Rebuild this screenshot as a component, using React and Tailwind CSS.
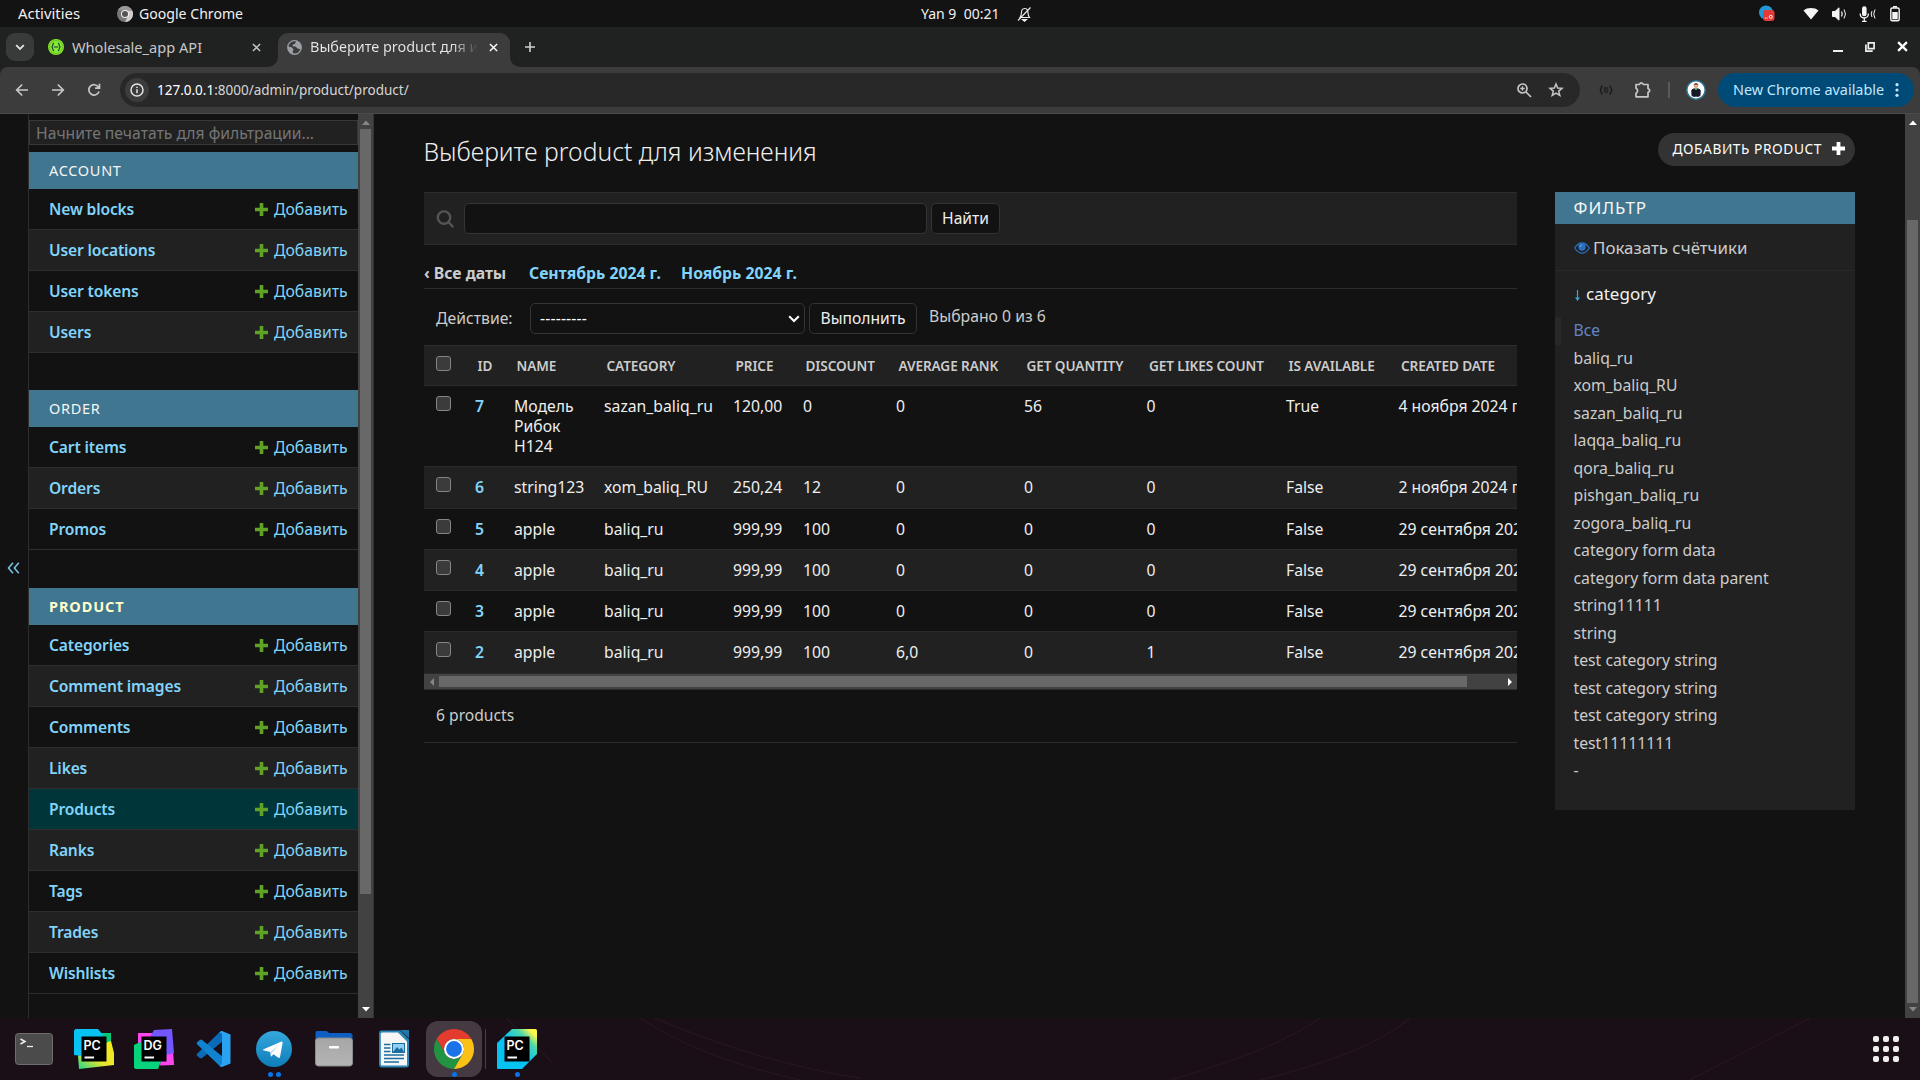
import React from 'react';

const accountModels = ['New blocks', 'User locations', 'User tokens', 'Users'];
const orderModels = ['Cart items', 'Orders', 'Promos'];
const productModels = ['Categories', 'Comment images', 'Comments', 'Likes', 'Products', 'Ranks', 'Tags', 'Trades', 'Wishlists'];

const headers = ['ID', 'NAME', 'CATEGORY', 'PRICE', 'DISCOUNT', 'AVERAGE RANK', 'GET QUANTITY', 'GET LIKES COUNT', 'IS AVAILABLE', 'CREATED DATE'];
const rows = [
  { h: 'h-[81px]', cells: ['7', 'Модель Рибок Н124', 'sazan_baliq_ru', '120,00', '0', '0', '56', '0', 'True', '4 ноября 2024 г.'] },
  { h: 'h-[42px]', cells: ['6', 'string123', 'xom_baliq_RU', '250,24', '12', '0', '0', '0', 'False', '2 ноября 2024 г.'] },
  { h: 'h-[41px]', cells: ['5', 'apple', 'baliq_ru', '999,99', '100', '0', '0', '0', 'False', '29 сентября 2024 г.'] },
  { h: 'h-[41px]', cells: ['4', 'apple', 'baliq_ru', '999,99', '100', '0', '0', '0', 'False', '29 сентября 2024 г.'] },
  { h: 'h-[41px]', cells: ['3', 'apple', 'baliq_ru', '999,99', '100', '0', '0', '0', 'False', '29 сентября 2024 г.'] },
  { h: 'h-[42px]', cells: ['2', 'apple', 'baliq_ru', '999,99', '100', '6,0', '0', '1', 'False', '29 сентября 2024 г.'] },
];
const categories = ['Все', 'baliq_ru', 'xom_baliq_RU', 'sazan_baliq_ru', 'laqqa_baliq_ru', 'qora_baliq_ru', 'pishgan_baliq_ru', 'zogora_baliq_ru', 'category form data', 'category form data parent', 'string11111', 'string', 'test category string', 'test category string', 'test category string', 'test11111111', '-'];

const tableGrid = 'grid grid-cols-[41px_39px_90px_129px_70px_93px_128px_122.5px_139.5px_112.5px_240px]';

function TopBar() {
  return (
    <div className="grid h-[27px] shrink-0 grid-cols-[900px_160px_1fr] items-center bg-[#131313] text-[#f0f0f0]">
      <div className="flex items-center pl-[18px]">
        <span className="w-[99px] text-[14.9px] leading-none">Activities</span>
        <svg width="16" height="16" viewBox="0 0 16 16">
          <circle cx="8" cy="8" r="8" fill="#777" />
          <path d="M8 4.5H15.2A8 8 0 0 1 8 16L11 10Z" fill="#cfcfcf" />
          <path d="M1 4A8 8 0 0 1 15 4.5H8Z" fill="#999" />
          <circle cx="8" cy="8" r="4" fill="#eee" />
          <circle cx="8" cy="8" r="3" fill="#555" />
        </svg>
        <span className="ml-[6px] pt-[1px] text-[14.1px] leading-none">Google Chrome</span>
      </div>
      <div className="flex items-center pl-[21px]">
        <span className="w-[96px] text-[14px] leading-none whitespace-pre">Yan 9  00:21</span>
        <svg width="15" height="16" viewBox="0 0 15 16" fill="none" stroke="#eee" strokeWidth="1.1">
          <path d="M3 11.5C5 9 4 6 5 4C6 2 9.500 2 10.500 4C11.200 6 10.500 9 12.500 11.500Z" />
          <path d="M5.500 13.500H9.500L7.500 15.200Z" fill="#eee" />
          <path d="M1 14.500L13.500 1.500" />
        </svg>
      </div>
      <div className="flex items-center justify-end pr-[19px]">
        <svg width="16" height="17" viewBox="0 0 16 17" className="mr-[28px]">
          <circle cx="7" cy="7.500" r="7" fill="#2497d8" />
          <rect x="4" y="5" width="11.500" height="11" rx="3" fill="#e53a35" />
          <path d="M6 13H9" stroke="#fff" strokeDasharray="1 .6" />
          <circle cx="11.800" cy="11.800" r="1.500" fill="none" stroke="#fff" strokeWidth=".9" />
        </svg>
        <svg width="16" height="13" viewBox="0 0 16 13" className="mr-[13px]"><path d="M8 12.500L.5 3.500C4 .2 12 .2 15.500 3.500Z" fill="#f5f5f5" /></svg>
        <svg width="16" height="14" viewBox="0 0 16 14" className="mr-[11px]" fill="none" stroke="#f5f5f5">
          <path d="M.5 4.500H3L7 .8V13.200L3 9.500H.5Z" fill="#f5f5f5" />
          <path d="M9.500 4.500Q11 7 9.500 9.500" strokeWidth="1.300" />
          <path d="M12 2.500Q15 7 12 11.500" strokeWidth="1" />
        </svg>
        <svg width="18" height="16" viewBox="0 0 18 16" className="mr-[12px]" fill="none" stroke="#f5f5f5">
          <rect x="3" y=".3" width="4.600" height="10" rx="2.300" fill="#f5f5f5" stroke="none" />
          <path d="M1.200 7.500C1.200 13.500 9.400 13.500 9.400 7.500M5.300 12V15.400M3 15.400H7.600" strokeWidth="1.300" />
          <path d="M13 5Q11.400 8 13 11M16 3.500Q13.400 8 16 12.500" />
        </svg>
        <svg width="12" height="16" viewBox="0 0 12 16">
          <path d="M4 0H8V1.500H4Z" fill="#f5f5f5" />
          <rect x="1.800" y="2" width="8.400" height="12.800" rx="1.500" fill="none" stroke="#f5f5f5" strokeWidth="1.400" />
          <rect x="3.300" y="6" width="5.400" height="7.300" fill="#f5f5f5" />
        </svg>
      </div>
    </div>
  );
}

function Cross({ size = 9, color = '#e3e3e3', w = 1.6 }) {
  return (
    <svg width={size} height={size} viewBox="0 0 10 10" fill="none" stroke={color} strokeWidth={w}>
      <path d="M1 1L9 9M9 1L1 9" />
    </svg>
  );
}

function TabStrip() {
  return (
    <div className="flex h-[40px] shrink-0 items-end bg-[#202222]">
      <div className="mb-[6px] ml-[6px] flex h-[28px] w-[28px] items-center justify-center rounded-[9px] bg-[#393a3a]">
        <svg width="10" height="7" viewBox="0 0 10 7" fill="none" stroke="#e3e3e3" strokeWidth="1.800"><path d="M1.200 1.200L5 5L8.800 1.200" /></svg>
      </div>
      <div className="flex h-[34px] w-[234px] items-center pb-[6px] pl-[14px]">
        <svg width="16" height="16" viewBox="0 0 16 16" className="shrink-0">
          <circle cx="8" cy="8" r="8" fill="#85ea2d" />
          <circle cx="8" cy="8" r="6.600" fill="none" stroke="#5aa81c" strokeWidth=".6" />
          <path d="M6 4.200C4.300 4.200 5.300 7.800 3.500 8C5.300 8.200 4.300 11.800 6 11.800M10 4.200C11.700 4.200 10.700 7.800 12.500 8C10.700 8.200 11.700 11.800 10 11.800M5.800 8H10.200" fill="none" stroke="#173647" strokeWidth="1.200" />
        </svg>
        <span className="ml-[8px] w-[180px] text-[14.600px] leading-none text-[#c7c7c7]">Wholesale_app API</span>
        <Cross color="#c7c7c7" />
      </div>
      <div className="relative ml-[10px] flex h-[34px] w-[232px] items-center rounded-t-[10px] bg-[#3c3c3c] pb-[6px] pl-[9px]">
        <svg className="absolute bottom-0 -left-[10px]" width="10" height="10" viewBox="0 0 10 10"><path d="M10 0V10H0A10 10 0 0 0 10 0Z" fill="#3c3c3c" /></svg>
        <svg className="absolute -right-[10px] bottom-0" width="10" height="10" viewBox="0 0 10 10"><path d="M0 0V10H10A10 10 0 0 1 0 0Z" fill="#3c3c3c" /></svg>
        <svg width="15" height="15" viewBox="0 0 15 15" className="shrink-0">
          <circle cx="7.500" cy="7.500" r="7.400" fill="#9aa0a6" />
          <path d="M1.500 6.500L5 7.500L6.500 9.500L5.500 12.500L7 13.600C10 13.800 12.500 12 13.300 9.200L10.500 8.500L8.500 6.500H6L5.500 4.800L8 3.800L9 1.400C5 .6 1.800 3.200 1.500 6.500Z" fill="#3c3c3c" />
        </svg>
        <span className="ml-[8px] w-[168px] overflow-hidden bg-gradient-to-r from-[#e8e8e8] from-84% to-transparent bg-clip-text py-1 text-[14.450px] leading-none whitespace-nowrap text-transparent">Выберите product для изменения</span>
        <span className="ml-[11px] flex"><Cross color="#fff" /></span>
      </div>
      <svg className="mb-[15px] ml-[15px]" width="10" height="10" viewBox="0 0 10 10" stroke="#d0d0d0" strokeWidth="1.600"><path d="M5 0V10M0 5H10" /></svg>
      <div className="mb-[15px] ml-auto flex items-center gap-[22px] pr-[12px]">
        <svg width="10" height="10" viewBox="0 0 10 10"><path d="M0 8H10V10H0Z" fill="#eee" /></svg>
        <svg width="10" height="10" viewBox="0 0 10 10" fill="none" stroke="#eee" strokeWidth="1.700"><path d="M3.300 .9H9.100V6.700H3.300ZM.9 2.500V9.100H7.700" /></svg>
        <Cross size={11} color="#fff" w={2} />
      </div>
    </div>
  );
}

function Toolbar() {
  return (
    <div className="h-[47px] shrink-0 bg-[#202222]">
      <div className="flex h-full items-center rounded-t-[8px] border-b border-[#4a4a4a] bg-[#3c3c3c] pl-[15px]">
        <svg width="14" height="14" viewBox="0 0 14 14" fill="none" stroke="#c7c7c7" strokeWidth="1.700"><path d="M13 7H2M7.200 1.500L1.700 7L7.200 12.500" /></svg>
        <svg className="ml-[22px]" width="14" height="14" viewBox="0 0 14 14" fill="none" stroke="#c7c7c7" strokeWidth="1.700"><path d="M1 7H12M6.800 1.500L12.300 7L6.800 12.500" /></svg>
        <svg className="ml-[22px]" width="14" height="14" viewBox="0 0 14 14" fill="none" stroke="#c7c7c7" strokeWidth="1.700"><path d="M12 8.500A5.200 5.200 0 1 1 11.500 4.200M12.500 .8V5.200H8.100" /></svg>
        <div className="ml-[19px] flex h-[34px] w-[1460px] items-center rounded-full bg-[#282828] pl-[5px]">
          <div className="flex h-[24px] w-[24px] items-center justify-center rounded-full bg-[#3c3c3c]">
            <svg width="14" height="14" viewBox="0 0 14 14" fill="none" stroke="#e3e3e3" strokeWidth="1.500"><circle cx="7" cy="7" r="6" /><path d="M7 6.200V10.200M7 3.700V5.100" /></svg>
          </div>
          <span className="ml-[8px] pt-[1px] text-[13.500px] leading-none text-[#d6d6d6]"><span className="text-white">127.0.0.1</span>:8000/admin/product/product/</span>
          <svg className="ml-auto" width="15" height="15" viewBox="0 0 15 15" fill="none" stroke="#c7c7c7" strokeWidth="1.700"><circle cx="5.500" cy="5.500" r="4.500" /><path d="M9 9L14 14" /><path d="M3.300 5.500H7.700M5.500 3.300V7.700" strokeWidth="1.300" /></svg>
          <svg className="mr-[16px] ml-[16px]" width="16" height="16" viewBox="0 0 16 16" fill="none" stroke="#c7c7c7" strokeWidth="1.500"><path d="M8 2L9.700 6L14 6.300L10.700 9.100L11.800 13.400L8 11.100L4.200 13.400L5.300 9.100L2 6.300L6.300 6Z" /></svg>
        </div>
        <svg className="ml-[19px]" width="14" height="10" viewBox="0 0 14 10" fill="none" stroke="#151515" strokeWidth="1.200"><path d="M3.500 .8C1.300 .8 2.800 4.600 .8 5C2.800 5.400 1.300 9.200 3.500 9.200M10.500 .8C12.700 .8 11.200 4.600 13.200 5C11.200 5.400 12.700 9.200 10.500 9.200M4.800 3H9.200M4.800 5H9.200M4.800 7H9.200" /></svg>
        <svg className="ml-[20px]" width="19" height="18" viewBox="0 0 19 18" fill="none" stroke="#c7c7c7" strokeWidth="1.700"><path d="M3 3.500H6.500Q8 .2 10.500 3.500H15V7.500Q18.500 9.500 15 11.500V15.800H3V12.500Q6.200 9.700 3 7Z" strokeLinejoin="round" /></svg>
        <div className="ml-[16px] h-[16px] w-[2px] bg-[#5a5a5a]" />
        <svg className="ml-[16px]" width="20" height="20" viewBox="0 0 20 20">
          <circle cx="10" cy="10" r="9.200" fill="#fff" stroke="#2b7696" strokeWidth="1.500" />
          <circle cx="10" cy="5.800" r="2.200" fill="#e2a884" />
          <path d="M7.600 5C7.600 2.800 12.400 2.800 12.400 5L11.500 4.600H8.500Z" fill="#45241c" />
          <path d="M5.500 15.500L5.200 10.500Q6 8.500 8.500 8.300L10 10L11.500 8.300Q14 8.500 14.800 10.500L14.500 15.500L13 16.800H7Z" fill="#15192a" />
          <path d="M8.700 8.200H11.300L10 10.500Z" fill="#3fa35a" />
        </svg>
        <div className="ml-[12px] flex h-[34px] w-[196px] items-center rounded-full bg-[#004a77] pl-[15px]">
          <span className="w-[162px] text-[14.400px] leading-none whitespace-nowrap text-[#c2e7ff]">New Chrome available</span>
          <svg width="4" height="14" viewBox="0 0 4 14" fill="#c2e7ff"><circle cx="2" cy="1.700" r="1.600" /><circle cx="2" cy="7" r="1.600" /><circle cx="2" cy="12.300" r="1.600" /></svg>
        </div>
      </div>
    </div>
  );
}

function ModelGroup({ title, models, current, selected }) {
  return (
    <div>
      <div className={`flex h-[37px] items-center bg-[#417690] pl-[20px] text-[14.500px] leading-none ${current ? 'font-bold tracking-[0.9px] text-[#ffffcc]' : 'tracking-[0.7px] text-[#f5f5f5]'}`}>{title}</div>
      {models.map((m, i) => (
        <div key={m} className={`flex h-[41px] items-center border-b border-[#2e2e2e] pr-[11px] pl-[20px] text-[15.750px] leading-none text-[#81d4fa] ${m === selected ? 'bg-[#00363a]' : i % 2 ? 'bg-[#212121]' : 'bg-[#121212]'}`}>
          <span className="pt-[2px] text-[15.600px] font-semibold tracking-[-0.150px]">{m}</span>
          <svg className="ml-auto" width="13" height="13" viewBox="0 0 13 13"><path d="M4.700 0H8.300V4.700H13V8.300H8.300V13H4.700V8.300H0V4.700H4.700Z" fill="#5fa225" /></svg>
          <span className="ml-[6px] w-[73px] pt-[2px] whitespace-nowrap">Добавить</span>
        </div>
      ))}
    </div>
  );
}

function Sidebar() {
  return (
    <div className="flex w-[374px] shrink-0">
      <div className="flex w-[29px] justify-center border-r border-[#2e2e2e]">
        <svg className="mt-[448px] mr-[1px]" width="13" height="12" viewBox="0 0 13 12" fill="none" stroke="#79c8ec" strokeWidth="1.500"><path d="M6 .8L1.500 6L6 11.200M11.800 .8L7.300 6L11.800 11.200" /></svg>
      </div>
      <div className="w-[329px] overflow-hidden pt-[6px]">
        <div className="mb-[7px] flex h-[25px] items-center border border-[#383838] bg-[#212121] pt-[2px] pl-[6px] text-[15.700px] leading-none whitespace-nowrap text-[#757575]">Начните печатать для фильтрации...</div>
        <ModelGroup title="ACCOUNT" models={accountModels} />
        <div className="h-[37px]" />
        <ModelGroup title="ORDER" models={orderModels} />
        <div className="h-[38px]" />
        <ModelGroup title="PRODUCT" models={productModels} current selected="Products" />
      </div>
      <div className="flex w-[16px] flex-col items-center border-r border-[#333333] bg-[#424242]">
        <svg className="mt-[6px]" width="8" height="5" viewBox="0 0 8 5"><path d="M0 5L4 .5L8 5Z" fill="#868686" /></svg>
        <div className="mt-[4px] h-[765px] w-[11px] bg-[#686868]" />
        <svg className="mt-auto mb-[6px]" width="8" height="5" viewBox="0 0 8 5"><path d="M0 0L4 4.500L8 0Z" fill="#fff" /></svg>
      </div>
    </div>
  );
}

function Checkbox({ className = '' }) {
  return <div className={`ml-[12px] h-[15px] w-[15px] rounded-[3px] border border-[#858585] bg-[#3b3b3b] ${className}`} />;
}

const button = 'flex h-[31px] items-center justify-center rounded-[5px] border border-[#333333] bg-[#121212] text-[15.600px] leading-none text-[#eeeeee]';

function ChangeList() {
  return (
    <div className="w-[1093px] shrink-0">
      <div className="flex h-[53px] items-center border-y border-[#2c2c2c] bg-[#212121] pl-[12px]">
        <svg width="18" height="18" viewBox="0 0 18 18" fill="none" stroke="#555" strokeWidth="2.400"><circle cx="8" cy="7.600" r="6.200" /><path d="M12.400 12L16.600 16.500" strokeLinecap="round" /></svg>
        <div className="ml-[10px] h-[31px] w-[463px] rounded-[5px] border border-[#353535] bg-[#121212]" />
        <div className={`${button} ml-[4px] w-[69px]`}>Найти</div>
      </div>
      <div className="flex h-[44px] items-center border-b border-[#2c2c2c] pt-[15px] text-[15.750px] leading-none font-bold whitespace-nowrap">
        <span className="w-[105px] text-[#cccccc]">‹ Все даты</span>
        <span className="w-[152px] text-[#81d4fa]">Сентябрь 2024 г.</span>
        <span className="text-[#81d4fa]">Ноябрь 2024 г.</span>
      </div>
      <div className="flex h-[56px] items-center pt-[3px] pl-[12px] text-[15.750px] leading-none text-[#cccccc]">
        <span className="w-[94px]">Действие:</span>
        <div className="flex h-[31px] w-[275px] items-center rounded-[5px] border border-[#353535] bg-[#121212] pl-[9px] text-white">
          <span className="tracking-[0.150px]">---------</span>
          <svg className="mr-[4px] ml-auto" width="12" height="8" viewBox="0 0 12 8" fill="none" stroke="#fff" strokeWidth="2"><path d="M1.200 1.200L6 6L10.800 1.200" /></svg>
        </div>
        <div className={`${button} ml-[4px] w-[108px]`}>Выполнить</div>
        <span className="ml-[12px] pb-[3px]">Выбрано 0 из 6</span>
      </div>
      <div className="overflow-hidden">
        <div className={`${tableGrid} h-[41px] items-center border-y border-[#2e2e2e] bg-[#212121] text-[13.600px] leading-none font-semibold tracking-[-0.100px] text-[#cccccc]`}>
          <Checkbox className="mb-[4px]" />
          {headers.map((h) => <span key={h} className="pl-[12.500px] whitespace-nowrap">{h}</span>)}
        </div>
        {rows.map((r, i) => (
          <div key={i} className={`${tableGrid} ${r.h} border-b border-[#2a2a2a] pt-[10px] text-[15.750px] leading-[20px] text-[#eeeeee] ${i % 2 ? 'bg-[#212121]' : 'bg-[#121212]'}`}>
            <Checkbox />
            {r.cells.map((c, j) => (
              <span key={j} className={`pl-[10px] ${j === 0 ? 'font-semibold text-[#81d4fa]' : ''} ${j === 1 ? 'w-[84px]' : 'whitespace-nowrap'}`}>{c}</span>
            ))}
          </div>
        ))}
        <div className="flex h-[15px] items-center bg-[#424242]">
          <svg className="ml-[6px]" width="4" height="8" viewBox="0 0 4 8"><path d="M4 0L0 4L4 8Z" fill="#868686" /></svg>
          <div className="ml-[5px] h-[11px] w-[1028px] bg-[#686868]" />
          <svg className="mr-[5px] ml-auto" width="4" height="8" viewBox="0 0 4 8"><path d="M0 0L4 4L0 8Z" fill="#fff" /></svg>
        </div>
      </div>
      <div className="flex h-[54px] items-center border-y border-[#2c2c2c] pl-[12px] text-[15.650px] leading-none text-[#cccccc]">6 products</div>
    </div>
  );
}

function FilterPanel() {
  return (
    <div className="h-[618px] w-[300px] shrink-0 bg-[#212121] leading-none text-[#cccccc]">
      <div className="flex h-[32px] items-center bg-[#417690] pb-[2px] pl-[18.500px] text-[17px] tracking-[1px] text-[#f5f5f5]">ФИЛЬТР</div>
      <div className="flex h-[47px] items-center border-b border-[#282828] pt-[2px] pl-[19px] text-[16.900px] whitespace-nowrap">
        <svg className="mr-[3px]" width="16" height="12" viewBox="0 0 16 12" fill="none" stroke="#2b70c0" strokeWidth="1.300">
          <path d="M.7 6C3.500 1.800 5.800 .8 8 .8C10.200 .8 12.500 1.800 15.300 6C12.500 10.200 10.200 11.200 8 11.200C5.800 11.200 3.500 10.200 .7 6Z" />
          <circle cx="8" cy="5" r="3.700" fill="#2b70c0" stroke="none" />
          <path d="M6 5Q6 3 8 2.700" stroke="#7fb2e8" strokeWidth=".8" />
        </svg>
        <span className="pt-[1px]">Показать счётчики</span>
      </div>
      <div className="flex h-[46px] items-center pb-[1px] pl-[20px] text-[#f2f2f2]">
        <svg className="mt-[3px] mr-[6px]" width="5" height="11" viewBox="0 0 5 11" fill="#3aa4dc"><path d="M1.900 0H3.100V7.500H5L2.500 11L0 7.500H1.900Z" /></svg>
        <span className="text-[17px]">category</span>
      </div>
      <ul className="text-[15.750px]">
        {categories.map((c, i) => (
          <li key={i} className={`flex h-[27.500px] items-center pt-[1px] ${i === 0 ? 'border-l-[6px] border-[#282828] pl-[12.500px] text-[#6284c6]' : 'pl-[18.500px]'}`}>{c}</li>
        ))}
      </ul>
    </div>
  );
}

function Page() {
  return (
    <div className="flex h-[904px] shrink-0 overflow-hidden bg-[#121212]">
      <Sidebar />
      <div className="flex-1 pl-[50px]">
        <div className="flex h-[78px] items-start justify-between pr-[50px]">
          <h1 className="-ml-[0.500px] pt-[21px] text-[24.700px] leading-[34px] font-light text-[#eeeeee]">Выберите product для изменения</h1>
          <div className="mt-[19px] flex h-[33px] w-[197px] items-center rounded-full bg-[#333333] pl-[14.500px] text-[13.750px] leading-none tracking-[0.550px] text-white">
            <span className="w-[159px] pb-[1px] whitespace-nowrap">ДОБАВИТЬ PRODUCT</span>
            <svg className="mb-[2px]" width="13" height="13" viewBox="0 0 13 13"><path d="M4.600 0H8.400V4.600H13V8.400H8.400V13H4.600V8.400H0V4.600H4.600Z" fill="#fff" /></svg>
          </div>
        </div>
        <div className="flex gap-[38px]">
          <ChangeList />
          <FilterPanel />
        </div>
      </div>
      <div className="flex w-[15px] flex-col items-center bg-[#424242]">
        <svg className="mt-[6px]" width="8" height="5" viewBox="0 0 8 5"><path d="M0 5L4 .5L8 5Z" fill="#fff" /></svg>
        <div className="mt-[95px] h-[783px] w-[11px] bg-[#686868]" />
        <svg className="mt-auto mb-[6px]" width="8" height="5" viewBox="0 0 8 5"><path d="M0 0L4 4.500L8 0Z" fill="#868686" /></svg>
      </div>
    </div>
  );
}

function IdeLabel({ label }) {
  return (
    <>
      <rect x="7.500" y="7.500" width="25" height="25" fill="#000" />
      <text x="9.500" y="20.500" fill="#fff" fontSize="12.500" fontWeight="600" fontFamily="Inter, sans-serif">{label}</text>
      <path d="M10.500 27.500H20V29.500H10.500Z" fill="#fff" />
    </>
  );
}

function DockItem({ dots = 0, active, children }) {
  return (
    <div className={`relative flex h-[56px] w-[56px] items-center justify-center rounded-[12px] ${active ? 'bg-[#453a41]' : ''}`}>
      {children}
      <div className="absolute bottom-0 flex gap-[3px]">
        {dots > 0 && <i className="h-[5px] w-[5px] rounded-full bg-[#0a73ea]" />}
        {dots > 1 && <i className="h-[5px] w-[5px] rounded-full bg-[#0a73ea]" />}
      </div>
    </div>
  );
}

function Dock() {
  return (
    <div className="relative flex h-[62px] shrink-0 items-center bg-[#1a0f17] pl-[6px]">
      <svg className="absolute inset-0" width="1920" height="62" fill="none" stroke="#24151f" strokeWidth="1.500">
        <path d="M506 0L552 44M640 0Q700 40 800 62M655 0Q760 45 860 60M1170 62Q1280 30 1320 0M1260 62Q1370 35 1410 0M1690 62L1810 0" />
      </svg>
      <div className="relative flex gap-[4px]">
        <DockItem>
          <svg width="38" height="32" viewBox="0 0 38 32"><rect x=".5" y=".5" width="37" height="31" rx="3" fill="#4b4b4b" stroke="#6e6e6e" /><path d="M5.500 6L10 8.500L5.500 11" fill="none" stroke="#eee" strokeWidth="1.500" /><path d="M12 13.500H18" stroke="#eee" strokeWidth="1.300" /></svg>
        </DockItem>
        <DockItem>
          <svg width="40" height="40" viewBox="0 0 40 40">
            <defs><linearGradient id="pa" x1="0" y1="1" x2="1" y2="0"><stop offset="0" stopColor="#21d789" /><stop offset=".45" stopColor="#e9e52f" /><stop offset="1" stopColor="#f3ea1c" /></linearGradient></defs>
            <path d="M23 4H37V20H23Z" fill="#07c878" />
            <path d="M4 27L10 22L37 12L40 24V36L5 40Z" fill="url(#pa)" />
            <path d="M1.500 0H24L29 6L8 27L0 26V1.500Z" fill="#07c3f2" />
            <IdeLabel label="PC" />
          </svg>
        </DockItem>
        <DockItem>
          <svg width="40" height="40" viewBox="0 0 40 40">
            <path d="M4 4H20V18H4Z" fill="#ff45ed" />
            <path d="M28 20L39 21L40 36L26 36.500Z" fill="#ff45ed" />
            <path d="M20 1L38 0L40 24L28 27L16 8Z" fill="#7256ff" />
            <path d="M0 16L6 13L28 30L24 40H1.500L0 38.500Z" fill="#07d37d" />
            <IdeLabel label="DG" />
          </svg>
        </DockItem>
        <DockItem>
          <svg width="36" height="36" viewBox="0 0 36 36">
            <path d="M26 0L27 10L5.500 27.500L3.800 27L.8 24.500V23L23.500 1.200Z" fill="#0a6ab6" />
            <path d="M26 36L27 26L5.500 8.500L3.800 9L.8 11.500V13L23.500 34.800Z" fill="#0f83cf" />
            <path d="M26 0L34.500 3.500V32.500L26 36C25 36 23.500 35 23.500 34.800L26 33V3L23.500 1.200C24.500 .3 25 0 26 0Z" fill="#2ba2f0" />
          </svg>
        </DockItem>
        <DockItem dots={2}>
          <svg width="36" height="38" viewBox="0 0 36 38">
            <defs><linearGradient id="tg" x1="0" y1="0" x2="0" y2="1"><stop offset="0" stopColor="#35a8dd" /><stop offset="1" stopColor="#0d7db9" /></linearGradient></defs>
            <circle cx="18" cy="19" r="18" fill="url(#tg)" />
            <path d="M7 19.500L25.500 11.500Q27 11 26.600 13L24 27Q23.500 28.600 22 27.600L17.500 24.200L15 26.700L14.300 22L8 20.500Q6.500 20 7 19.500Z" fill="#fff" />
            <path d="M14.300 22L23 14.500L15.600 23L15 26.700Z" fill="#b9d9ea" />
          </svg>
        </DockItem>
        <DockItem>
          <svg width="38" height="36" viewBox="0 0 38 36">
            <defs><linearGradient id="fm" x1="0" y1="0" x2="0" y2="1"><stop offset="0" stopColor="#a6a6a6" /><stop offset="1" stopColor="#b4b4b4" /></linearGradient></defs>
            <path d="M2 0H11Q12.500 0 14 2H35Q37.500 2 37.500 4.500V14H.5V2Q.5 0 2 0Z" fill="#0f5fc2" />
            <rect x=".5" y="7" width="37" height="28" rx="3" fill="url(#fm)" stroke="#8a8a8a" />
            <rect x="14" y="15" width="10" height="2.500" rx="1" fill="#fff" />
          </svg>
        </DockItem>
        <DockItem>
          <svg width="32" height="38" viewBox="0 0 32 38">
            <path d="M3.500 .5H22L31 9.500V34.500Q31 37.500 28 37.500H4Q1 37.500 1 34.500V3Q1 .5 3.500 .5Z" fill="#2a85b8" />
            <path d="M4 2.500H20L29 11.500V35.500H4Q2.800 35.500 2.800 34V4Q2.800 2.500 4 2.500Z" fill="#f6f6f6" />
            <path d="M22 0H31V8.500Z" fill="#1f76a8" />
            <path d="M6 14.500H12.500M6 18H12.500M6 21.500H12.500M6 25H26M6 28.500H26M6 32H21" stroke="#1a6d9e" strokeWidth="1.500" />
            <rect x="14.500" y="13.500" width="12" height="9" fill="#8fd1f4" stroke="#1a6d9e" />
            <path d="M15 22L19 17L21.500 19.500L23.500 17.500L26 22Z" fill="#1a6d9e" />
          </svg>
        </DockItem>
        <DockItem active dots={1}>
          <svg width="40" height="40" viewBox="0 0 48 48">
            <path d="M24 12H44.780A24 24 0 0 0 3.220 12L13.610 30A12 12 0 0 1 24 12Z" fill="#e33b2e" />
            <path d="M34.390 30L24 48A24 24 0 0 1 3.220 12L13.610 30A12 12 0 0 0 34.390 30Z" fill="#229342" />
            <path d="M34.390 30L24 48A24 24 0 0 0 44.780 12H24A12 12 0 0 1 34.390 30Z" fill="#fbc116" />
            <circle cx="24" cy="24" r="12" fill="#fff" />
            <circle cx="24" cy="24" r="9.500" fill="#1a73e8" />
          </svg>
        </DockItem>
      </div>
      <div className="relative mr-[3px] ml-[3px] h-[40px] w-[1px] bg-[#46404a]" />
      <div className="relative flex">
        <DockItem dots={1}>
          <svg width="40" height="40" viewBox="0 0 40 40">
            <defs><linearGradient id="pb" x1="0" y1="1" x2="1" y2="0"><stop offset=".5" stopColor="#07c3f2" /><stop offset=".75" stopColor="#4fd8a8" /><stop offset=".9" stopColor="#fcf84a" /></linearGradient></defs>
            <path d="M15 0H38.500Q40 0 40 1.500V25L25 40H1.500Q0 40 0 38.500V14Z" fill="url(#pb)" />
            <IdeLabel label="PC" />
          </svg>
        </DockItem>
      </div>
      <div className="relative mr-[21px] ml-auto grid grid-cols-3 gap-[4px]">
        {Array.from({ length: 9 }, (_, i) => <i key={i} className="h-[6px] w-[6px] rounded-[2px] bg-[#efefef]" />)}
      </div>
    </div>
  );
}

export default function App() {
  return (
    <div className="flex h-[1080px] w-[1920px] flex-col overflow-hidden bg-[#121212] font-['Noto_Sans',sans-serif]">
      <TopBar />
      <TabStrip />
      <Toolbar />
      <Page />
      <Dock />
    </div>
  );
}
